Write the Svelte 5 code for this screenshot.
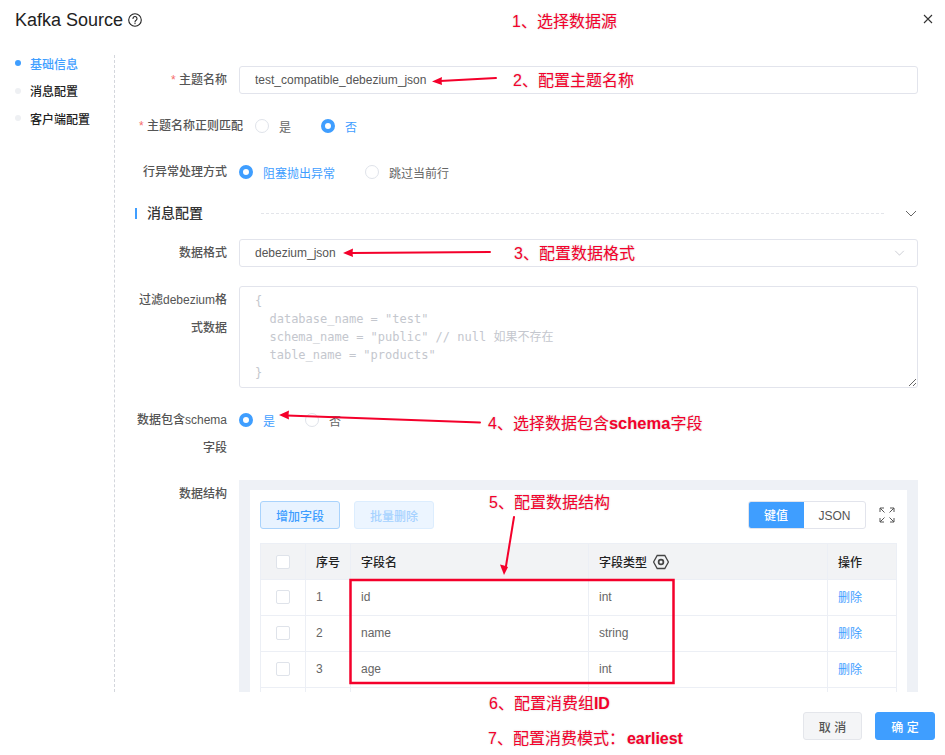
<script>
	const rows = [
		{ no: 1, name: 'id', type: 'int' },
		{ no: 2, name: 'name', type: 'string' },
		{ no: 3, name: 'age', type: 'int' }
	];

	const placeholder = `{
  database_name = "test"
  schema_name = "public" // null 如果不存在
  table_name = "products"
}`;
</script>

<div class="dialog">
	<header class="head">
		<h1>Kafka Source</h1>
		<svg class="help" viewBox="0 0 14 14" width="14" height="14" fill="none" stroke="#222" stroke-width="1.1">
			<circle cx="7" cy="7" r="6.3" />
			<path d="M5 5.5a2 2 0 1 1 3.1 1.7C7.4 7.6 7 8 7 8.9" stroke-linecap="round" />
			<circle cx="7" cy="10.6" r=".7" fill="#222" stroke="none" />
		</svg>
		<button class="close" aria-label="close">
			<svg viewBox="0 0 10 10" width="10" height="10" fill="none" stroke="#333" stroke-width="1.1">
				<path d="M1 1l8 8M9 1l-8 8" />
			</svg>
		</button>
	</header>

	<div class="main">
		<nav class="steps">
			<a href="#base" class="step active"><i></i>基础信息</a>
			<a href="#msg" class="step"><i></i>消息配置</a>
			<a href="#client" class="step"><i></i>客户端配置</a>
		</nav>

		<form class="form">
			<div class="row">
				<span class="label"><em>*</em> 主题名称</span>
				<input class="input" value="test_compatible_debezium_json" />
			</div>

			<div class="row">
				<span class="label wide"><em>*</em> 主题名称正则匹配</span>
				<div class="radios">
					<span class="radio"><i></i>是</span>
					<span class="radio on"><i></i>否</span>
				</div>
			</div>

			<div class="row">
				<span class="label">行异常处理方式</span>
				<div class="radios">
					<span class="radio on"><i></i>阻塞抛出异常</span>
					<span class="radio"><i></i>跳过当前行</span>
				</div>
			</div>

			<div class="section">
				<b>消息配置</b>
				<span class="dash"></span>
				<svg viewBox="0 0 12 7" width="12" height="7" fill="none" stroke="#666" stroke-width="1">
					<path d="M1 1l5 5 5-5" />
				</svg>
			</div>

			<div class="row">
				<span class="label">数据格式</span>
				<div class="input select">
					debezium_json
					<svg viewBox="0 0 12 7" width="11" height="6" fill="none" stroke="#c4c7ce" stroke-width="1">
						<path d="M1 1l5 5 5-5" />
					</svg>
				</div>
			</div>

			<div class="row">
				<span class="label">过滤debezium格式数据</span>
				<textarea class="area" {placeholder}></textarea>
			</div>

			<div class="row">
				<span class="label">数据包含schema字段</span>
				<div class="radios">
					<span class="radio on"><i></i>是</span>
					<span class="radio"><i></i>否</span>
				</div>
			</div>

			<div class="row">
				<span class="label">数据结构</span>
				<div class="panel">
					<div class="card">
						<div class="tools">
							<button type="button" class="btn">增加字段</button>
							<button type="button" class="btn off">批量删除</button>
							<div class="toggle">
								<span class="sel">键值</span>
								<span>JSON</span>
							</div>
							<svg class="expand" viewBox="0 0 16 16" width="16" height="16" fill="none" stroke="#555" stroke-width="1">
								<path d="M1 5V1h4M1 1l4.5 4.5M11 1h4v4M15 1l-4.5 4.5M1 11v4h4M1 15l4.5-4.5M15 11v4h-4M15 15l-4.5-4.5" />
							</svg>
						</div>
						<table>
							<colgroup>
								<col class="c1" /><col class="c2" /><col class="c3" /><col class="c4" /><col class="c5" />
							</colgroup>
							<thead>
								<tr>
									<th class="center"><span class="check"></span></th>
									<th>序号</th>
									<th>字段名</th>
									<th>
										<span class="type">字段类型
											<svg viewBox="0 0 16 16" width="16" height="16" fill="none" stroke="#444" stroke-width="1.3">
												<path d="M4.2 1.5h7.6L15.4 8l-3.6 6.5H4.2L.6 8z" />
												<circle cx="8" cy="8" r="2.4" stroke-width="1.7" />
											</svg>
										</span>
									</th>
									<th>操作</th>
								</tr>
							</thead>
							<tbody>
								{#each rows as row}
									<tr>
										<td class="center"><span class="check"></span></td>
										<td>{row.no}</td>
										<td>{row.name}</td>
										<td>{row.type}</td>
										<td><a href="#del" class="del">删除</a></td>
									</tr>
								{/each}
								<tr>
									<td></td><td></td><td></td><td></td><td></td>
								</tr>
							</tbody>
						</table>
					</div>
				</div>
			</div>
		</form>
	</div>

	<footer class="foot">
		<button class="btn2">取 消</button>
		<button class="btn2 ok">确 定</button>
	</footer>

	<!-- hand drawn notes on top of the screenshot -->
	<div class="notes">
		<svg class="marks" width="945" height="755" viewBox="0 0 945 755" fill="none">
			<g stroke="#f4002b" stroke-width="2" stroke-linecap="round">
				<path d="M496 78L440 81" />
				<path d="M490 252L351 253" />
				<path d="M480 422.5L287 415.5" />
				<path d="M514 517L506 566" />
			</g>
			<g fill="#f4002b">
				<path d="M432 81.5l10-4.5-.5 4 .5 4z" />
				<path d="M343 253l10-4.5-.5 4.5.5 4z" />
				<path d="M279 415l10-4.5-.5 4.5.5 4.5z" />
				<path d="M504 575l-4-10.5 4 1 4 1.5z" />
			</g>
			<rect x="350.5" y="580" width="323" height="103" stroke="#f4002b" stroke-width="2.5" />
		</svg>
		<span class="note n1">1、选择数据源</span>
		<span class="note n2">2、配置主题名称</span>
		<span class="note n3">3、配置数据格式</span>
		<span class="note n4">4、选择数据包含<b>schema</b>字段</span>
		<span class="note n5">5、配置数据结构</span>
		<span class="note n6">6、配置消费组<b>ID</b></span>
		<span class="note n7">7、配置消费模式：<b>earliest</b></span>
	</div>
</div>

<style>
	:global(body) {
		background: #fff;
	}

	.dialog {
		position: relative;
		width: 945px;
		height: 755px;
		display: flex;
		flex-direction: column;
		overflow: hidden;
		background: #fff;
		font-family: 'Liberation Sans', 'Noto Sans CJK SC', sans-serif;
		font-size: 12px;
		color: #555;
	}

	.head {
		flex: none;
		height: 55px;
		display: flex;
		align-items: flex-start;
		padding: 8px 12px 0 15px;
		box-sizing: border-box;
	}

	.head h1 {
		margin: 0;
		font-size: 18px;
		line-height: 24px;
		font-weight: 400;
		color: #222;
	}

	.help {
		margin: 5px 0 0 5px;
	}

	.close {
		margin: 6px 0 0 auto;
		padding: 0;
		border: 0;
		background: none;
		width: 10px;
		height: 10px;
		display: flex;
	}

	.main {
		flex: 1;
		min-height: 0;
		display: flex;
	}

	.steps {
		flex: none;
		width: 115px;
		box-sizing: border-box;
		border-right: 1px dashed #d3d6dc;
		padding-left: 15px;
		display: flex;
		flex-direction: column;
		gap: 11.5px;
	}

	.step {
		display: flex;
		align-items: center;
		height: 16px;
		gap: 9px;
		color: #222;
		font-weight: 500;
		text-decoration: none;
	}

	.step i {
		width: 6px;
		height: 6px;
		border-radius: 50%;
		background: #eef0f3;
	}

	.step.active {
		color: #3f9eff;
	}

	.step.active i {
		background: #3f9eff;
	}

	.form {
		flex: 1;
		min-width: 0;
		overflow: hidden;
		padding: 11px 27px 0 20px;
		display: flex;
		flex-direction: column;
		gap: 18px;
	}

	.row {
		flex: none;
		display: flex;
		gap: 12px;
	}

	.label {
		flex: none;
		width: 92px;
		text-align: right;
		line-height: 28px;
		font-weight: 500;
		color: #555;
	}

	.label.wide {
		width: 105px;
		margin-left: 3px;
		white-space: nowrap;
	}

	.label em {
		color: #f56c6c;
		font-style: normal;
	}

	.input {
		flex: 1;
		min-width: 0;
		box-sizing: border-box;
		height: 28px;
		padding: 0 15px;
		border: 1px solid #e2e4ec;
		border-radius: 3px;
		outline: 0;
		font: inherit;
		color: #555;
		background: #fff;
	}

	.select {
		display: flex;
		align-items: center;
		justify-content: space-between;
		padding-right: 12px;
		margin-bottom: 1px;
	}

	.area {
		flex: 1;
		min-width: 0;
		box-sizing: border-box;
		height: 102px;
		padding: 5px 15px;
		border: 1px solid #e2e4ec;
		border-radius: 3px;
		outline: 0;
		font-family: 'DejaVu Sans Mono', 'Noto Sans CJK SC', monospace;
		font-size: 12px;
		line-height: 18px;
		color: #555;
	}

	.area::placeholder {
		color: #c4c7ce;
		opacity: 1;
	}

	.radios {
		display: flex;
		align-items: center;
		gap: 30px;
		height: 28px;
	}

	.radio {
		display: flex;
		align-items: center;
		gap: 10px;
		color: #666;
	}

	.radio i {
		box-sizing: border-box;
		width: 14px;
		height: 14px;
		border-radius: 50%;
		border: 1px solid #dfe3ea;
		background: #fff;
	}

	.radio.on {
		color: #3f9eff;
	}

	.radio.on i {
		border: 4.5px solid #3f9eff;
	}

	.section {
		flex: none;
		display: flex;
		align-items: center;
		height: 20px;
		margin: -1px 0 -2px;
	}

	.section b {
		border-left: 2px solid #3f9eff;
		line-height: 11px;
		padding-left: 10px;
		font-size: 14px;
		font-weight: 500;
		color: #333;
		flex: none;
	}

	.dash {
		flex: 1;
		margin: 0 21px 0 58px;
		border-top: 1px dashed #e3e5ea;
	}

	.section svg {
		margin-right: 1px;
		flex: none;
	}

	.panel {
		flex: 1;
		min-width: 0;
		background: #eef1f6;
		padding: 10px 11px;
	}

	.card {
		background: #fff;
		padding: 11px 10px;
	}

	.tools {
		display: flex;
		align-items: center;
		gap: 14px;
		margin-bottom: 14px;
	}

	.btn {
		box-sizing: border-box;
		width: 80px;
		height: 28px;
		padding: 0;
		border: 1px solid #a9d3fc;
		border-radius: 3px;
		background: #e8f3ff;
		color: #3f9eff;
		font: inherit;
		font-weight: 500;
	}

	.btn.off {
		border-color: #dcedfe;
		background: #ecf5ff;
		color: #a6d2ff;
	}

	.toggle {
		display: flex;
		margin-left: auto;
		height: 28px;
		box-sizing: border-box;
		border: 1px solid #e2e4ec;
		border-radius: 3px;
		overflow: hidden;
		line-height: 28px;
		font-weight: 500;
		color: #555;
	}

	.toggle span {
		width: 61px;
		text-align: center;
	}

	.toggle .sel {
		width: 56px;
		margin: -1px 0 -1px -1px;
		line-height: 30px;
		background: #3f9eff;
		color: #fff;
	}

	.expand {
		margin: 0 2px 0 -1px;
	}

	table {
		width: 637px;
		table-layout: fixed;
		border-collapse: collapse;
		border: 1px solid #eceff5;
	}

	.c1 {
		width: 45px;
	}

	.c2 {
		width: 45px;
	}

	.c3 {
		width: 238px;
	}

	.c4 {
		width: 239px;
	}

	th,
	td {
		height: 36px;
		padding: 0 0 0 10px;
		box-sizing: border-box;
		text-align: left;
		white-space: nowrap;
		border: 1px solid #eceff5;
		color: #666;
		font-size: 12px;
	}

	td {
		padding-bottom: 2px;
	}

	th {
		background: #f2f3f5;
		color: #222;
		font-weight: 500;
	}

	th.center,
	td.center {
		padding: 0;
		text-align: center;
	}

	td.center {
		padding-bottom: 2px;
	}

	.check {
		display: block;
		box-sizing: border-box;
		width: 14px;
		height: 14px;
		margin: 0 auto;
		border: 1px solid #dfe3ea;
		border-radius: 2px;
		background: #fff;
	}

	.type {
		display: flex;
		align-items: center;
		gap: 6px;
	}

	.del {
		color: #3f9eff;
		text-decoration: none;
	}

	.foot {
		flex: none;
		height: 63px;
		box-sizing: border-box;
		display: flex;
		justify-content: flex-end;
		gap: 13px;
		padding: 20px 10px 0 0;
		background: #fff;
	}

	.btn2 {
		width: 59px;
		height: 28px;
		box-sizing: border-box;
		padding: 0;
		border: 1px solid #e4e6eb;
		border-radius: 3px;
		background: #f4f5f7;
		color: #555;
		font: inherit;
		font-weight: 500;
	}

	.btn2.ok {
		width: 60px;
		border-color: #3f9eff;
		background: #3f9eff;
		color: #fff;
	}

	.notes {
		position: absolute;
		inset: 0;
		pointer-events: none;
	}

	.marks {
		position: absolute;
		left: 0;
		top: 0;
	}

	.note {
		position: absolute;
		font-size: 16px;
		line-height: 20px;
		white-space: nowrap;
		color: #f4002b;
		text-shadow: 0 0 2px rgba(0, 0, 0, 0.2);
	}

	.n1 {
		left: 512px;
		top: 12px;
	}

	.n2 {
		left: 513px;
		top: 71px;
	}

	.n3 {
		left: 514px;
		top: 244px;
	}

	.n4 {
		left: 488px;
		top: 413px;
	}

	.n4 b {
		font-size: 16.5px;
	}

	.n5 {
		left: 489px;
		top: 493px;
	}

	.n6 {
		left: 489px;
		top: 694px;
	}

	.n7 {
		left: 488px;
		top: 729px;
	}

	.n7 b {
		margin-left: 2px;
	}
</style>
